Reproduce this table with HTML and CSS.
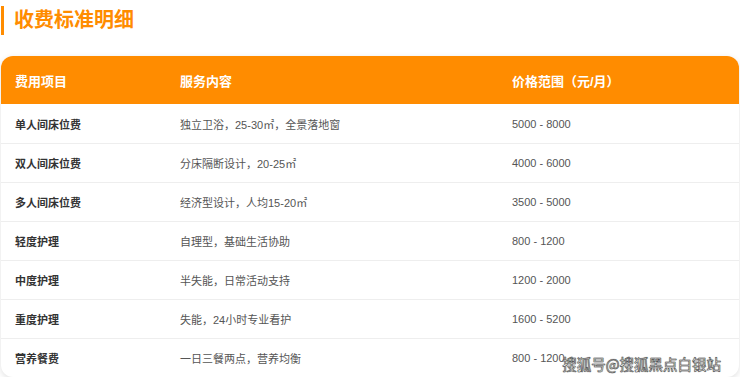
FILE: index.html
```html
<!DOCTYPE html>
<html lang="zh">
<head>
<meta charset="utf-8">
<link rel="stylesheet" href="styles.css">
</head>
<body>
<div class="page">
  <h2 class="title">收费标准明细</h2>
  <div class="card">
    <table class="fees">
      <colgroup><col class="c1"><col class="c2"><col class="c3"></colgroup>
      <thead>
        <tr><th>费用项目</th><th>服务内容</th><th>价格范围（元/月）</th></tr>
      </thead>
      <tbody>
        <tr><td class="name">单人间床位费</td><td>独立卫浴，25-30㎡，全景落地窗</td><td>5000 - 8000</td></tr>
        <tr><td class="name">双人间床位费</td><td>分床隔断设计，20-25㎡</td><td>4000 - 6000</td></tr>
        <tr><td class="name">多人间床位费</td><td>经济型设计，人均15-20㎡</td><td>3500 - 5000</td></tr>
        <tr><td class="name">轻度护理</td><td>自理型，基础生活协助</td><td>800 - 1200</td></tr>
        <tr><td class="name">中度护理</td><td>半失能，日常活动支持</td><td>1200 - 2000</td></tr>
        <tr><td class="name">重度护理</td><td>失能，24小时专业看护</td><td>1600 - 5200</td></tr>
        <tr><td class="name">营养餐费</td><td>一日三餐两点，营养均衡</td><td>800 - 1200</td></tr>
      </tbody>
    </table>
    <div class="watermark">搜狐号@搜狐黑点白银站</div>
  </div>
</div>
</body>
</html>
```

FILE: styles.css
```css
html, body {
  margin: 0;
  padding: 0;
  background: #ffffff;
}
body {
  font-family: "Liberation Sans", Arial, "Noto Sans CJK SC", sans-serif;
  overflow: hidden;
}
.page {
  padding: 6px 1px 0 1px;
}
.title {
  margin: 0;
  border-left: 3px solid #ff8c00;
  padding-left: 10px;
  height: 29px;
  line-height: 29px;
  font-size: 20px;
  font-weight: bold;
  color: #ff8c00;
}
.card {
  position: relative;
  margin-top: 21px;
  border-radius: 12px;
  overflow: hidden;
  background: #fff;
  box-shadow: 0 2px 6px rgba(0,0,0,0.12);
}
.fees {
  width: 100%;
  border-collapse: collapse;
  table-layout: fixed;
}
.c1 { width: 165px; }
.c2 { width: 332px; }
.fees th, .fees td {
  text-align: left;
  padding: 0 14px;
}
.fees th {
  background: #ff8c00;
  color: #fff;
  height: 48px;
  font-size: 13px;
  font-weight: bold;
}
.fees td {
  height: 38px;
  font-size: 11px;
  color: #555;
  border-top: 1px solid #eeeeee;
}
.fees tbody tr:first-child td {
  border-top: none;
  height: 39px;
}
.fees td.name {
  font-weight: bold;
  color: #333;
}
.watermark {
  position: absolute;
  right: 18px;
  bottom: 3px;
  font-size: 14.5px;
  color: #fff;
  font-family: "Noto Sans CJK SC", sans-serif;
  -webkit-text-stroke: 0.5px #444;
  text-shadow: 0 0 1px #444;
}
```
